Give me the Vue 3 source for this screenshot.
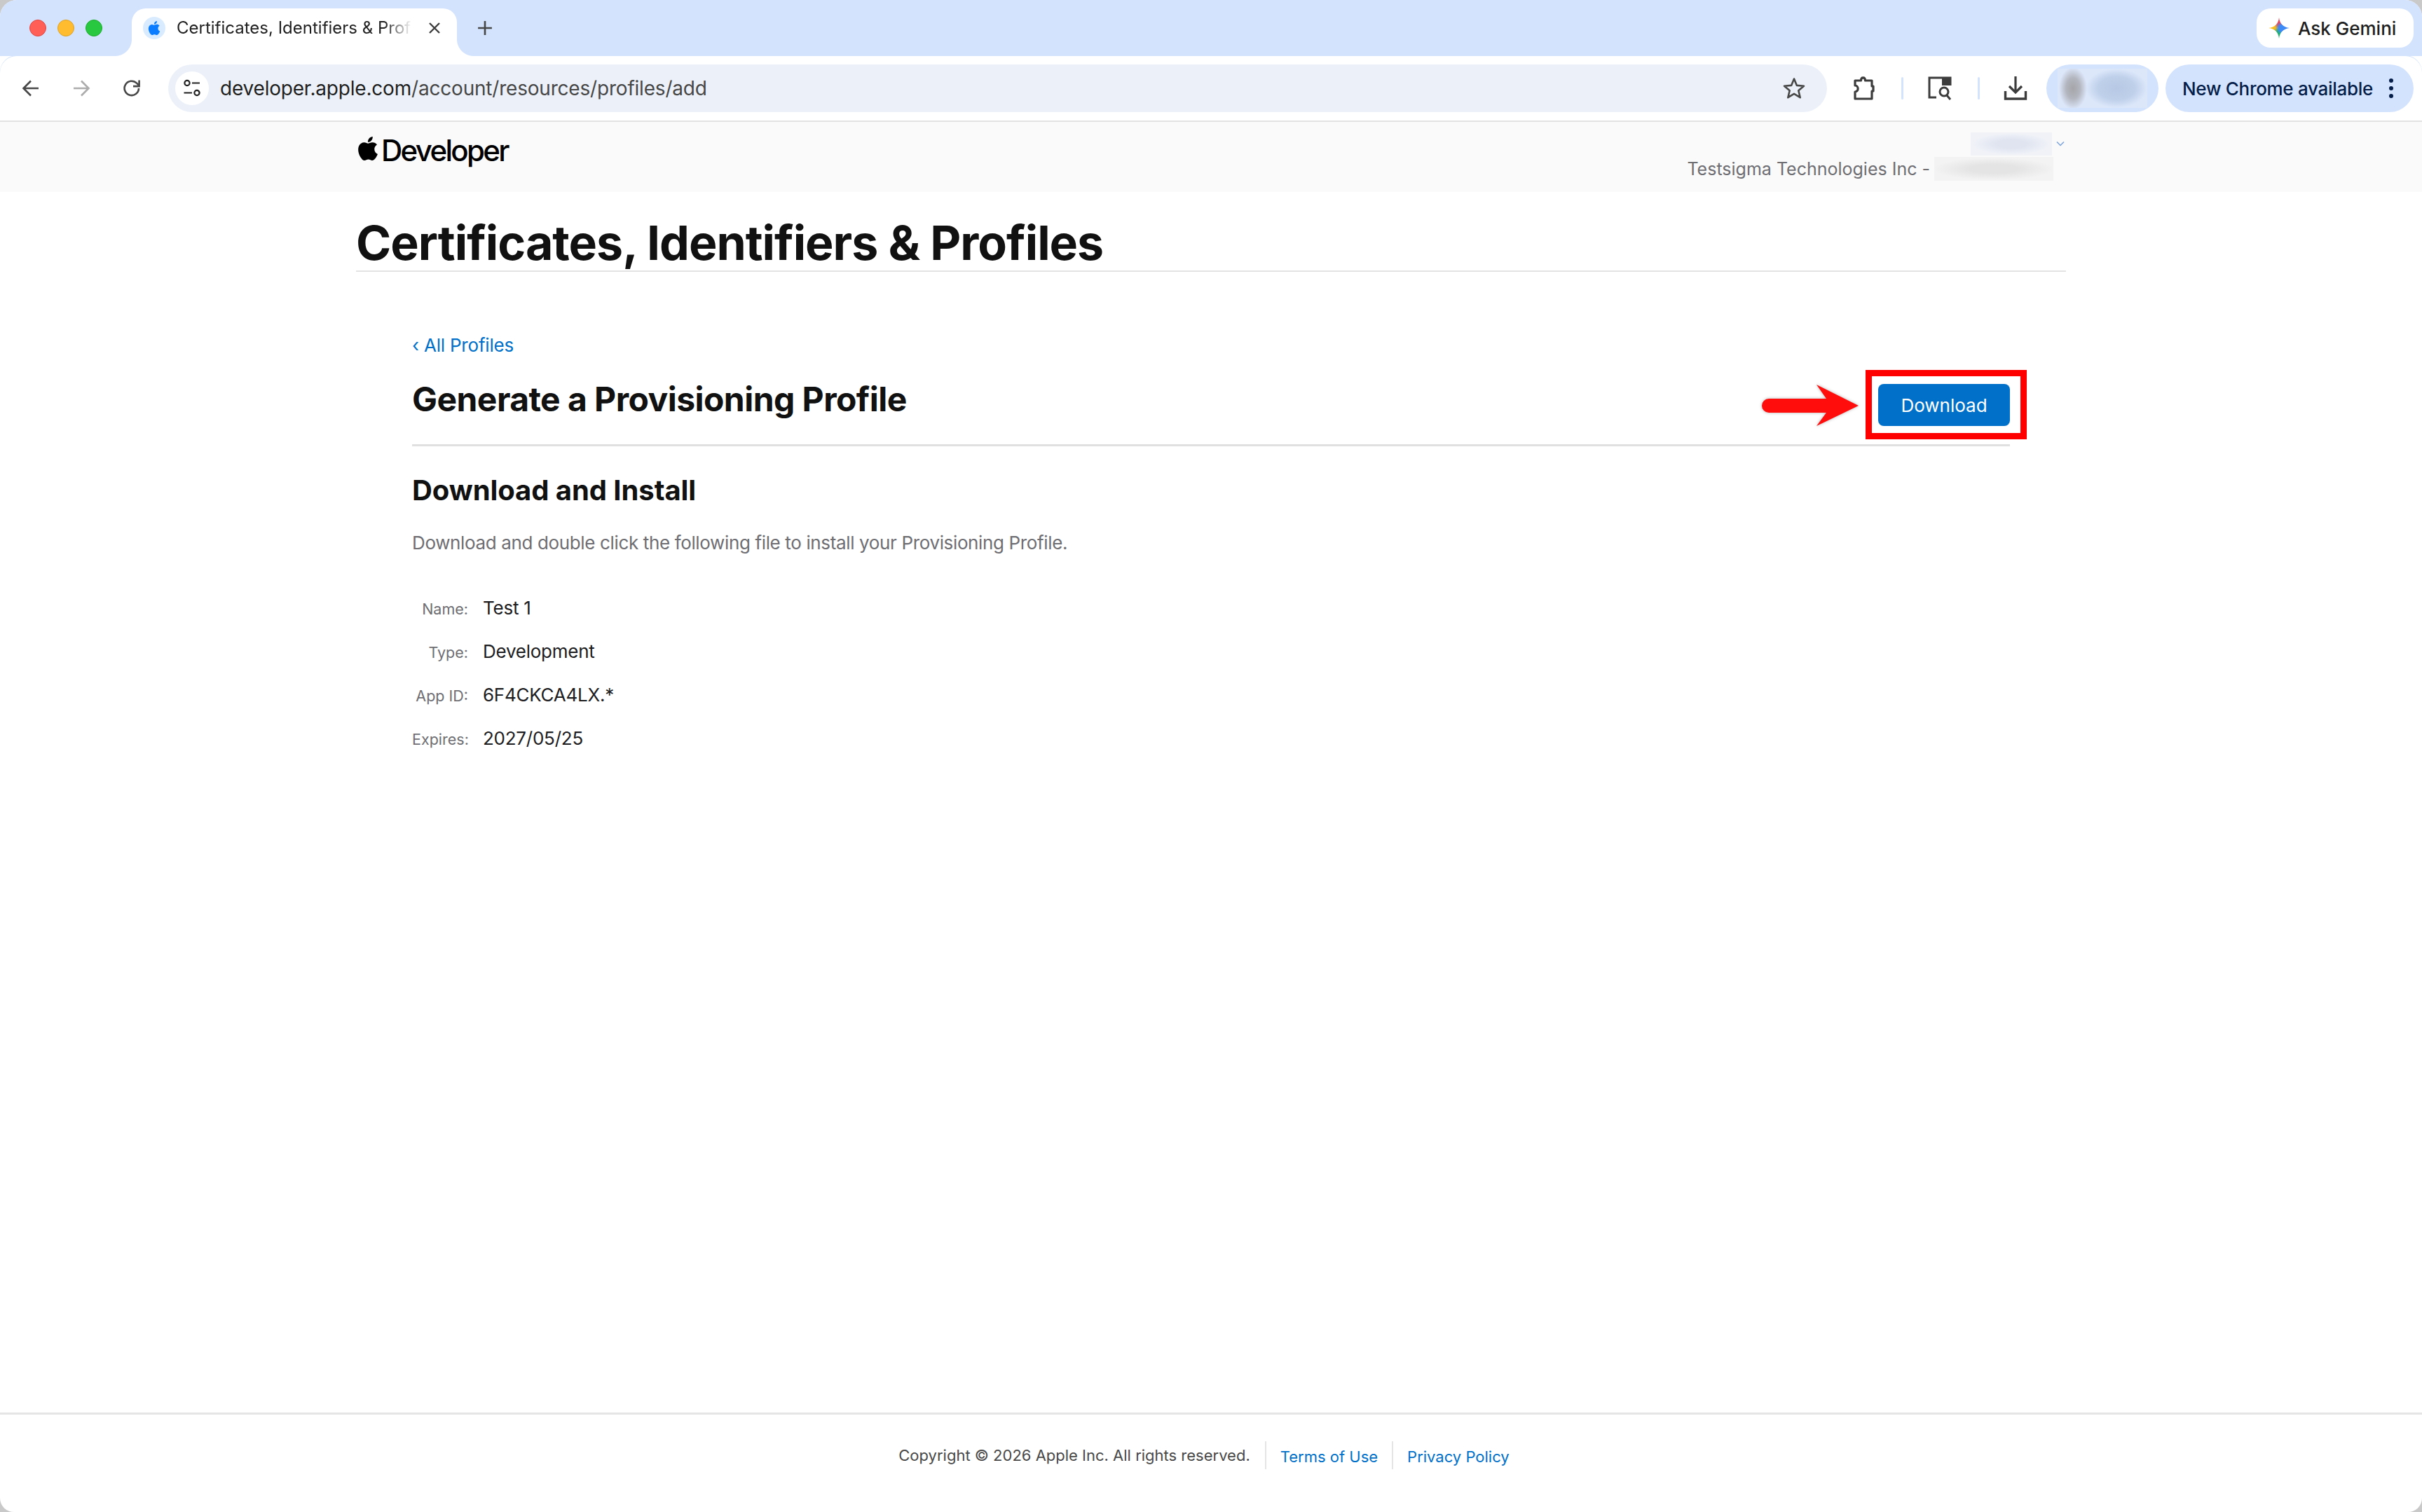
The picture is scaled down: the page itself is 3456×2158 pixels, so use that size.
<script setup>
const rows = [
  { label: 'Name:', value: 'Test 1' },
  { label: 'Type:', value: 'Development' },
  { label: 'App ID:', value: '6F4CKCA4LX.*' },
  { label: 'Expires:', value: '2027/05/25' },
]
const appleD = 'M12.152 6.896c-.948 0-2.415-1.078-3.96-1.04-2.04.027-3.91 1.183-4.961 3.014-2.117 3.675-.546 9.103 1.519 12.09 1.013 1.454 2.208 3.09 3.792 3.039 1.52-.065 2.09-.987 3.935-.987 1.831 0 2.35.987 3.96.948 1.637-.026 2.676-1.48 3.676-2.948 1.156-1.688 1.636-3.325 1.662-3.415-.039-.013-3.182-1.221-3.22-4.857-.026-3.04 2.48-4.494 2.597-4.559-1.429-2.09-3.623-2.324-4.39-2.376-2-.156-3.675 1.09-4.61 1.09zM15.53 3.83c.843-1.012 1.4-2.427 1.245-3.83-1.207.052-2.662.805-3.532 1.818-.78.896-1.454 2.338-1.273 3.714 1.338.104 2.715-.688 3.559-1.701'
</script>

<template>
  <div class="window">
    <div class="tabstrip">
      <div class="lights">
        <span class="light red"></span>
        <span class="light yellow"></span>
        <span class="light green"></span>
      </div>
      <div class="tab">
        <span class="favicon">
          <svg viewBox="0 0 24 24" width="20" height="20"><path :d="appleD" fill="#0a7cff" /></svg>
        </span>
        <span class="tab-title">Certificates, Identifiers &amp; Profiles</span>
        <svg class="tab-close" viewBox="0 0 20 20" width="20" height="20"><path d="M3 3l14 14M17 3L3 17" stroke="#3c3c3c" stroke-width="2.4" fill="none" /></svg>
      </div>
      <svg class="new-tab" viewBox="0 0 20 20" width="22" height="22"><path d="M10 1v18M1 10h18" stroke="#474747" stroke-width="2.4" fill="none" /></svg>
      <div class="gemini">
        <span class="gemini-star"></span>
        <span>Ask Gemini</span>
      </div>
    </div>

    <div class="toolbar">
      <svg class="nav" viewBox="0 0 28 28" width="28" height="28"><path d="M25 14H4M14 3.5 3.5 14 14 24.5" stroke="#474747" stroke-width="2.6" fill="none" /></svg>
      <svg class="nav" viewBox="0 0 28 28" width="28" height="28"><path d="M3 14h21M14 3.5 24.5 14 14 24.5" stroke="#acacac" stroke-width="2.6" fill="none" /></svg>
      <svg class="nav" viewBox="0 0 28 28" width="28" height="28"><path d="M24 14a10.2 10.2 0 1 1-3-7.3l3 3" stroke="#474747" stroke-width="2.6" fill="none" /><path d="M24.6 2.5v8.6H16" fill="none" stroke="#474747" stroke-width="2.6" /></svg>
      <div class="omnibox">
        <span class="tune">
          <svg viewBox="0 0 28 28" width="28" height="28">
            <circle cx="7" cy="6.5" r="3.6" fill="none" stroke="#1f1f1f" stroke-width="2.2" />
            <path d="M14 6.5h11M2.500 20.500H14" stroke="#1f1f1f" stroke-width="2.2" fill="none" />
            <circle cx="21" cy="20.500" r="3.600" fill="none" stroke="#1f1f1f" stroke-width="2.2" />
          </svg>
        </span>
        <span class="url">developer.apple.com<span class="url-path">/account/resources/profiles/add</span></span>
        <svg class="star" viewBox="0 0 32 32" width="32" height="32"><path d="M16 2.500l3.900 9.400 10.100.8-7.700 6.600 2.400 9.900L16 23.900l-8.700 5.300 2.400-9.900L2 12.700l10.100-.8z" fill="none" stroke="#474747" stroke-width="2.600" stroke-linejoin="round" /></svg>
      </div>
      <div class="actions-icons">
        <svg class="tool ext" viewBox="0 0 32 36" width="32" height="36"><path d="M3 7h8.500c0-5.500 6-5.500 6 0H27v8h2v7h-2v11H3V23c5.500 0 5.500-9 0-9z" fill="none" stroke="#3c3c3c" stroke-width="3.200" stroke-linejoin="round" /></svg>
        <span class="sep"></span>
        <svg class="tool lens" viewBox="0 0 36 36" width="36" height="36">
          <path d="M13 31H3V3h30v11" fill="none" stroke="#3c3c3c" stroke-width="3" />
          <path d="M21 3h12v11H21z" fill="#3c3c3c" />
          <circle cx="24" cy="23" r="6" fill="#fff" stroke="#3c3c3c" stroke-width="3" />
          <path d="M28 28l5 6" stroke="#3c3c3c" stroke-width="3" />
        </svg>
        <span class="sep"></span>
        <svg class="tool dl" viewBox="0 0 34 36" width="34" height="36">
          <path d="M17 1v23M8 15l9 9 9-9" fill="none" stroke="#3c3c3c" stroke-width="3.200" />
          <path d="M2.500 22v11h29V22" fill="none" stroke="#3c3c3c" stroke-width="3.400" />
        </svg>
      </div>
      <div class="profile"><span class="profile-blur"></span></div>
      <div class="update">
        <span>New Chrome available</span>
        <span class="dots"><i></i><i></i><i></i></span>
      </div>
    </div>

    <header class="site-head">
      <div class="wrap head-row">
        <div class="logo">
          <svg viewBox="0 0 24 24" width="34" height="36"><path :d="appleD" fill="#000" /></svg>
          <span>Developer</span>
        </div>
        <div class="account">
          <div class="acct-top">
            <span class="blur-name"></span>
            <svg viewBox="0 0 12 8" width="12" height="8"><path d="M1 1.500l5 5 5-5" fill="none" stroke="#7aa3dc" stroke-width="1.500" /></svg>
          </div>
          <div class="acct-team">
            <span>Testsigma Technologies Inc -</span>
            <span class="blur-team"></span>
          </div>
        </div>
      </div>
    </header>

    <main class="wrap main">
      <h1 class="page-title">Certificates, Identifiers &amp; Profiles</h1>
      <div class="content">
        <a class="back">‹ All Profiles</a>
        <div class="head-bar">
          <h2>Generate a Provisioning Profile</h2>
          <div class="btn-wrap">
            <button class="download">Download</button>
            <span class="red-box"></span>
            <svg class="red-arrow" viewBox="0 0 140 62" width="140" height="62">
              <path d="M10 21H92L78 1 138 31 78 60 92 41H10a10 10 0 0 1 0-20z" fill="#ff0d0d" />
            </svg>
          </div>
        </div>
        <h3>Download and Install</h3>
        <p class="desc">Download and double click the following file to install your Provisioning Profile.</p>
        <dl class="details">
          <template v-for="r in rows" :key="r.label">
            <dt>{{ r.label }}</dt>
            <dd>{{ r.value }}</dd>
          </template>
        </dl>
      </div>
    </main>

    <footer class="foot">
      <span class="copy">Copyright © 2026 Apple Inc. All rights reserved.</span>
      <a class="flink">Terms of Use</a>
      <a class="flink">Privacy Policy</a>
    </footer>
  </div>
</template>

<style scoped>
.window {
  width: 3456px;
  height: 2158px;
  display: flex;
  flex-direction: column;
  overflow: hidden;
  background: #fff;
  border-radius: 24px 24px 20px 20px;
  font-family: Inter, "Liberation Sans", sans-serif;
  color: #1d1d1f;
}
.tabstrip {
  flex: none;
  height: 80px;
  background: #d3e3fd;
  display: flex;
  align-items: flex-end;
  padding-right: 12px;
  box-sizing: border-box;
}
.lights {
  width: 188px;
  height: 80px;
  flex: none;
  display: flex;
  align-items: center;
  gap: 16px;
  padding-left: 42px;
  box-sizing: border-box;
}
.light { width: 24px; height: 24px; border-radius: 50%; box-sizing: border-box; }
.red { background: #ff5f57; border: 1px solid #e0443e; }
.yellow { background: #febc2e; border: 1px solid #dea123; }
.green { background: #28c840; border: 1px solid #1aab29; }
.tab {
  position: relative;
  flex: none;
  width: 464px;
  height: 68px;
  background: #fff;
  border-radius: 20px 20px 0 0;
  display: flex;
  align-items: center;
  padding: 0 22px 12px 16px;
  box-sizing: border-box;
}
.tab::before, .tab::after {
  content: "";
  position: absolute;
  bottom: 0;
  width: 24px;
  height: 24px;
}
.tab::before { left: -24px; background: radial-gradient(circle at 0 0, transparent 23.5px, #fff 24.5px); }
.tab::after { right: -24px; background: radial-gradient(circle at 100% 0, transparent 23.5px, #fff 24.5px); }
.favicon {
  width: 32px;
  height: 32px;
  border-radius: 50%;
  background: #d9ecff;
  flex: none;
  display: flex;
  align-items: center;
  justify-content: center;
}
.tab-title {
  margin-left: 16px;
  width: 336px;
  flex: none;
  font-size: 24px;
  line-height: 32px;
  white-space: nowrap;
  overflow: hidden;
  color: #1f1f1f;
  -webkit-mask-image: linear-gradient(90deg, #000 88%, transparent 100%);
  mask-image: linear-gradient(90deg, #000 88%, transparent 100%);
}
.tab-close { margin-left: 22px; flex: none; }
.new-tab { flex: none; margin: 0 0 29px 29px; }
.gemini {
  margin: 0 0 12px auto;
  width: 224px;
  height: 56px;
  border-radius: 20px;
  background: #fff;
  display: flex;
  align-items: center;
  gap: 12px;
  padding-left: 17px;
  box-sizing: border-box;
  font-size: 26px;
  font-weight: 500;
  color: #1f1f1f;
}
.gemini-star {
  width: 30px;
  height: 30px;
  flex: none;
  clip-path: path("M15 0C16 9 21 14 30 15C21 16 16 21 15 30C14 21 9 16 0 15C9 14 14 9 15 0Z");
  background: radial-gradient(circle at 62% 50%, #3e8bf8 0 16%, transparent 38%), conic-gradient(#e8475a 0 20deg, #4285f4 70deg 130deg, #1eb36a 175deg 205deg, #f9bb1c 265deg 285deg, #e8475a 340deg);
}
.toolbar {
  flex: none;
  height: 92px;
  background: #fff;
  border-radius: 24px 24px 0 0;
  display: flex;
  align-items: center;
  box-sizing: border-box;
  box-shadow: 0 -1px 0 #d3e3fd;
}
.nav { flex: none; margin: 0 14px 0 30px; }
.omnibox {
  margin-left: 24px;
  width: 2367px;
  height: 68px;
  border-radius: 34px;
  background: #ecf1f9;
  display: flex;
  align-items: center;
  flex: none;
  padding-left: 10px;
  box-sizing: border-box;
}
.tune {
  width: 48px;
  height: 48px;
  border-radius: 50%;
  background: #fff;
  flex: none;
  display: flex;
  align-items: center;
  justify-content: center;
}
.url {
  margin-left: 16px;
  font-size: 28px;
  letter-spacing: -0.2px;
  color: #1f1f1f;
  white-space: nowrap;
}
.url-path { color: #474747; }
.star { margin-left: auto; margin-right: 31px; flex: none; }
.actions-icons {
  display: flex;
  align-items: center;
  margin-left: 37px;
  flex: none;
}
.sep { width: 3px; height: 32px; background: #d3e3fd; border-radius: 2px; flex: none; }
.ext { margin-right: 37px; }
.lens { margin: 0 36px 0 34px; }
.dl { margin-left: 34px; }
.profile {
  margin-left: 27px;
  width: 160px;
  height: 68px;
  border-radius: 34px;
  background: #d3e3fd;
  display: flex;
  align-items: center;
  justify-content: center;
  flex: none;
}
.profile-blur {
  width: 128px;
  height: 56px;
  background:
    radial-gradient(ellipse 20px 30px at 22px 50%, #a5a5a9 0, #b3b6bf 50%, transparent 100%),
    radial-gradient(ellipse 44px 28px at 84px 50%, #b6c8e4 0, #bfd0ea 60%, transparent 100%),
    #dce7fa;
}
.update {
  margin-left: 10px;
  width: 354px;
  height: 68px;
  border-radius: 34px;
  background: #d3e3fd;
  display: flex;
  align-items: center;
  padding-left: 24px;
  box-sizing: border-box;
  font-size: 26px;
  font-weight: 500;
  letter-spacing: -0.3px;
  color: #041e49;
  flex: none;
}
.dots {
  margin-left: auto;
  margin-right: 29px;
  display: flex;
  flex-direction: column;
  gap: 5px;
}
.dots i { width: 6px; height: 6px; border-radius: 50%; background: #041e49; display: block; }
.site-head {
  flex: none;
  height: 102px;
  background: #fafafa;
  border-top: 2px solid #e2e2e2;
  box-sizing: border-box;
}
.wrap { width: 2440px; margin: 0 auto; }
.head-row { display: flex; justify-content: space-between; }
.logo {
  display: flex;
  align-items: center;
  height: 80px;
  font-size: 42px;
  font-weight: 500;
  color: #000;
  letter-spacing: -2.7px;
}
.logo svg { margin-right: 2px; margin-top: -4px; }
.account { display: flex; flex-direction: column; align-items: flex-end; padding-right: 2px; padding-top: 14px; }
.acct-top { display: flex; align-items: center; gap: 6px; height: 34px; }
.blur-name { width: 116px; height: 33px; background: radial-gradient(ellipse 54px 15px at 50% 50%, #dfe4f0 40%, #f0f2f8 100%); }
.acct-team { display: flex; align-items: center; margin: 2px 16px 0 0; font-size: 25px; color: #6e6e73; }
.blur-team { width: 170px; height: 34px; margin-left: 6px; background: radial-gradient(ellipse 86px 16px at 50% 50%, #e4e4e4 40%, #f3f3f3 100%); }
.main { flex: 1; display: flex; flex-direction: column; }
.page-title {
  margin: 0;
  height: 114px;
  box-sizing: border-box;
  padding-top: 34px;
  font-size: 68px;
  line-height: 76px;
  font-weight: 700;
  color: #111;
  border-bottom: 2px solid #e3e3e3;
  letter-spacing: -1px;
}
.content { padding: 0 80px; }
.back {
  display: block;
  margin-top: 89px;
  font-size: 26px;
  line-height: 32px;
  letter-spacing: -0.2px;
  color: #0070c9;
}
.head-bar {
  margin-top: 25px;
  height: 103px;
  box-sizing: border-box;
  border-bottom: 3px solid #e0e0e0;
  display: flex;
  justify-content: space-between;
  align-items: flex-start;
}
.head-bar h2 {
  margin: 8px 0 0;
  font-size: 48px;
  line-height: 56px;
  font-weight: 700;
  letter-spacing: -0.55px;
  color: #111;
}
.btn-wrap { position: relative; margin-top: 14px; }
.download {
  display: block;
  width: 188px;
  height: 60px;
  border: 0;
  border-radius: 8px;
  background: #0070c9;
  color: #fff;
  font-family: inherit;
  font-size: 26px;
}
.red-box {
  position: absolute;
  left: -18px;
  top: -20px;
  width: 230px;
  height: 99px;
  border: 9px solid #ff0000;
  box-sizing: border-box;
}
.red-arrow {
  position: absolute;
  left: -166px;
  top: 0;
  filter: drop-shadow(0 0 2px rgba(0, 0, 0, 0.3));
}
.content h3 {
  margin: 39px 0 0;
  font-size: 40px;
  line-height: 48px;
  font-weight: 700;
  letter-spacing: -0.07px;
  color: #111;
}
.desc {
  margin: 35px 0 0;
  font-size: 26px;
  line-height: 32px;
  letter-spacing: -0.36px;
  color: #6e6e73;
}
.details {
  margin: 45px 0 0;
  display: grid;
  grid-template-columns: 80px 1fr;
  grid-auto-rows: 62px;
  column-gap: 21px;
  align-items: center;
}
.details dt { text-align: right; font-size: 21.500px; color: #6e6e73; margin-top: 3px; }
.details dd { margin: 0; font-size: 26px; letter-spacing: -0.25px; color: #1d1d1f; }
.foot {
  flex: none;
  height: 142px;
  box-sizing: border-box;
  border-top: 3px solid #e5e5e5;
  display: flex;
  align-items: flex-start;
  justify-content: center;
  padding-top: 38px;
  font-size: 22px;
}
.copy { color: #494949; line-height: 40px; padding-right: 21px; }
.flink {
  color: #0070c9;
  line-height: 40px;
  height: 40px;
  padding: 2px 20px 0;
  box-sizing: border-box;
  border-left: 2px solid #e5e5e5;
}
</style>

<style>
html, body { margin: 0; background: #c9c9c9; }
</style>
